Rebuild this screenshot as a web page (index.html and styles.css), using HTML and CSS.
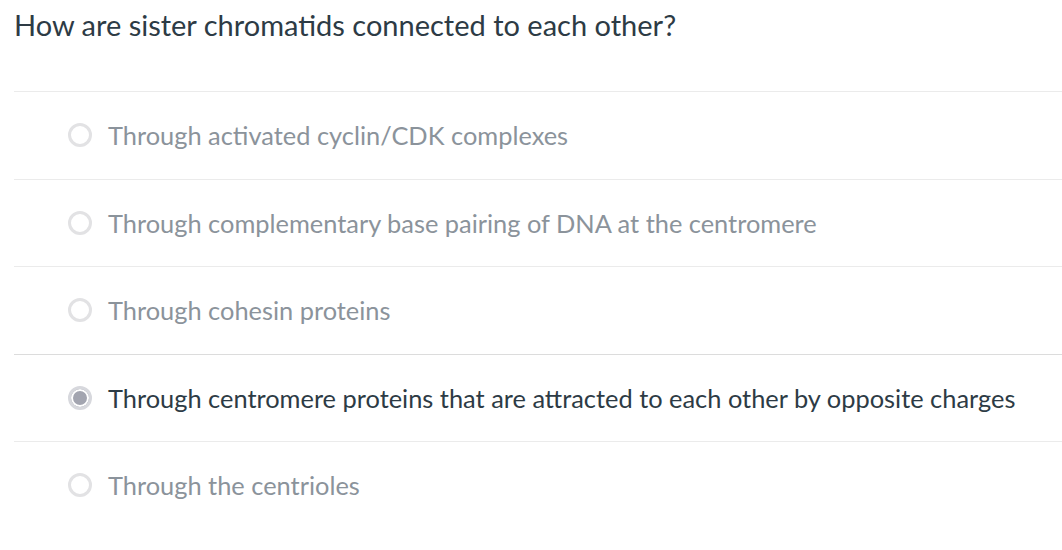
FILE: index.html
```html
<!DOCTYPE html>
<html>
<head>
<meta charset="utf-8">
<link rel="stylesheet" href="styles.css">
</head>
<body>
<div class="quiz">
  <div class="question">How are sister chromatids connected to each other?</div>
  <div class="answers">
    <label class="answer"><span class="radio"></span><span class="text">Through activated cyclin/CDK complexes</span></label>
    <label class="answer"><span class="radio"></span><span class="text">Through complementary base pairing of DNA at the centromere</span></label>
    <label class="answer"><span class="radio"></span><span class="text">Through cohesin proteins</span></label>
    <label class="answer selected"><span class="radio"></span><span class="text">Through centromere proteins that are attracted to each other by opposite charges</span></label>
    <label class="answer"><span class="radio"></span><span class="text">Through the centrioles</span></label>
  </div>
</div>
</body>
</html>
```
FILE: styles.css
```css
html, body {
  margin: 0;
  padding: 0;
  background: #fff;
}
.quiz {
  padding-left: 14px;
  font-family: Lato, "Liberation Sans", sans-serif;
  color: #2d3b45;
}
.question {
  font-size: 29px;
  line-height: 34px;
  padding-top: 8px;
  height: 91px;
  box-sizing: border-box;
}
.answer {
  display: flex;
  align-items: center;
  height: 87.5px;
  border-top: 1px solid #ebebeb;
  box-sizing: border-box;
  padding-left: 54px;
  gap: 16px;
  color: #8b939b;
  font-size: 25.4px;
}
.answer.selected {
  color: #2d3b45;
  border-top-color: #dcdcdc;
}
.radio {
  width: 24px;
  height: 24px;
  border: 3px solid #e2e2e4;
  border-radius: 50%;
  box-sizing: border-box;
  flex: none;
  background: #fff;
}
.answer.selected .radio {
  border: 3px solid #d7d8dd;
  background: #a3a5b0;
  box-shadow: inset 0 0 0 2px #fff;
}
```
